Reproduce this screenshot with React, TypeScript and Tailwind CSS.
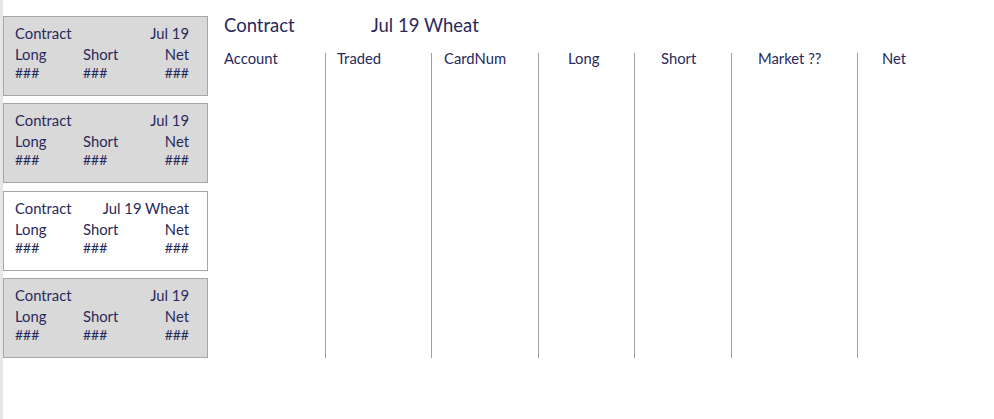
import React from 'react';

type Card = { contract: string; active?: boolean };

const cards: Card[] = [
  { contract: 'Jul 19' },
  { contract: 'Jul 19' },
  { contract: 'Jul 19 Wheat', active: true },
  { contract: 'Jul 19' },
];

const columns = [
  { label: 'Account', w: 'w-[101px]', pl: 'pl-0', border: false },
  { label: 'Traded', w: 'w-[106px]', pl: 'pl-[11px]', border: true },
  { label: 'CardNum', w: 'w-[107px]', pl: 'pl-[12px]', border: true },
  { label: 'Long', w: 'w-[96px]', pl: 'pl-[29px]', border: true },
  { label: 'Short', w: 'w-[97px]', pl: 'pl-[26px]', border: true },
  { label: 'Market ??', w: 'w-[126px]', pl: 'pl-[26px]', border: true },
  { label: 'Net', w: 'w-[74px]', pl: 'pl-[24px]', border: true },
];

const PositionCard: React.FC<{ card: Card }> = ({ card }) => (
  <div
    className={`h-[80px] w-[205px] border border-[#a6a6a6] pl-[11px] pr-[18px] pt-[6px] ${
      card.active ? 'bg-white' : 'bg-[#d9d9d9]'
    }`}
  >
    <div className="flex justify-between leading-[20px] text-[14.8px]">
      <span>Contract</span>
      <span>{card.contract}</span>
    </div>
    <div className="grid grid-cols-[68px_1fr_auto] leading-[22px] text-[14.8px]">
      <span>Long</span>
      <span>Short</span>
      <span className="text-right">Net</span>
    </div>
    <div className="grid grid-cols-[68px_1fr_auto] leading-[16px] text-[14px]">
      <span>###</span>
      <span>###</span>
      <span className="text-right">###</span>
    </div>
  </div>
);

export default function App() {
  return (
    <div className="h-[419px] w-[994px] bg-white text-[#29295a] font-['Lato',_sans-serif] flex border-l-[3px] border-[#e6e6e6]">
      <div className="flex flex-col gap-[7.3px] pt-[16px]">
        {cards.map((c, i) => (
          <PositionCard key={i} card={c} />
        ))}
      </div>

      <div className="pl-[16px] pt-[14px]">
        <div className="flex text-[18.5px] leading-[22px]">
          <span className="w-[147px]">Contract</span>
          <span>Jul 19 Wheat</span>
        </div>
        <div className="flex mt-[17px]">
          {columns.map((col) => (
            <div
              key={col.label}
              className={`${col.w} h-[305px] ${col.border ? 'border-l border-[#a0a0a0]' : ''}`}
            >
              <div className={`${col.pl} text-[14.8px] leading-[18px] -mt-[4px]`}>{col.label}</div>
            </div>
          ))}
        </div>
      </div>
    </div>
  );
}
